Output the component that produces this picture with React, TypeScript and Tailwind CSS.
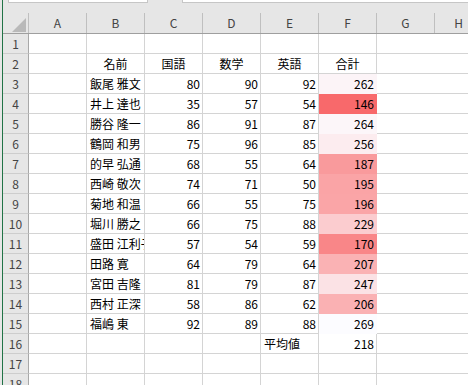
import React from 'react';

type Row = { name: string; kokugo: number; sugaku: number; eigo: number };

const rows: Row[] = [
  { name: '飯尾 雅文', kokugo: 80, sugaku: 90, eigo: 92 },
  { name: '井上 達也', kokugo: 35, sugaku: 57, eigo: 54 },
  { name: '勝谷 隆一', kokugo: 86, sugaku: 91, eigo: 87 },
  { name: '鶴岡 和男', kokugo: 75, sugaku: 96, eigo: 85 },
  { name: '的早 弘通', kokugo: 68, sugaku: 55, eigo: 64 },
  { name: '西崎 敬次', kokugo: 74, sugaku: 71, eigo: 50 },
  { name: '菊地 和温', kokugo: 66, sugaku: 55, eigo: 75 },
  { name: '堀川 勝之', kokugo: 66, sugaku: 75, eigo: 88 },
  { name: '盛田 江利子', kokugo: 57, sugaku: 54, eigo: 59 },
  { name: '田路 寛', kokugo: 64, sugaku: 79, eigo: 64 },
  { name: '宮田 吉隆', kokugo: 81, sugaku: 79, eigo: 87 },
  { name: '西村 正深', kokugo: 58, sugaku: 86, eigo: 62 },
  { name: '福嶋 東', kokugo: 92, sugaku: 89, eigo: 88 },
];

const totals = rows.map((r) => r.kokugo + r.sugaku + r.eigo);
const minT = Math.min(...totals);
const maxT = Math.max(...totals);

// 2色スケール（白 → 赤）
function heat(v: number) {
  const t = (maxT - v) / (maxT - minT);
  const r = Math.round(252 + (248 - 252) * t);
  const g = Math.round(252 + (105 - 252) * t);
  const b = Math.round(255 + (107 - 255) * t);
  return `rgb(${r}, ${g}, ${b})`;
}

const cols = ['A', 'B', 'C', 'D', 'E', 'F', 'G'];

function Cell({
  children,
  align = 'left',
  fill,
}: {
  children?: React.ReactNode;
  align?: 'left' | 'right' | 'center';
  fill?: string;
}) {
  const alignCls =
    align === 'right' ? 'justify-end pr-[2px]' : align === 'center' ? 'justify-center' : 'justify-start pl-[3px]';
  return (
    <div
      className={`flex h-[20px] w-[58px] shrink-0 items-center overflow-hidden whitespace-nowrap border-b border-r border-[#d4d4d4] text-[12px] text-black ${alignCls}`}
      style={fill ? { backgroundColor: fill, borderColor: fill } : undefined}
    >
      {children}
    </div>
  );
}

function LastCell() {
  return <div className="h-[20px] flex-1 border-b border-[#d4d4d4]" />;
}

function RowHead({ n }: { n: number }) {
  return (
    <div className="flex h-[20px] w-[26px] shrink-0 items-center justify-center border-b border-r border-b-[#cdcdcd] border-r-[#a8a8a8] bg-[#e6e6e6] text-[12px] text-[#444]">
      {n}
    </div>
  );
}

export default function App() {
  const body: React.ReactNode[] = [];

  body.push(
    <div key="r1" className="flex">
      <RowHead n={1} />
      {cols.slice(0, 6).map((c) => (
        <Cell key={c} />
      ))}
      <LastCell />
    </div>
  );

  body.push(
    <div key="r2" className="flex">
      <RowHead n={2} />
      <Cell />
      <Cell align="center">名前</Cell>
      <Cell align="center">国語</Cell>
      <Cell align="center">数学</Cell>
      <Cell align="center">英語</Cell>
      <Cell align="center">合計</Cell>
      <LastCell />
    </div>
  );

  rows.forEach((r, i) => {
    const total = totals[i];
    body.push(
      <div key={`d${i}`} className="flex">
        <RowHead n={i + 3} />
        <Cell />
        <Cell>{r.name}</Cell>
        <Cell align="right">{r.kokugo}</Cell>
        <Cell align="right">{r.sugaku}</Cell>
        <Cell align="right">{r.eigo}</Cell>
        <Cell align="right" fill={heat(total)}>
          {total}
        </Cell>
        <LastCell />
      </div>
    );
  });

  const avg = Math.round(totals.reduce((a, b) => a + b, 0) / totals.length);

  body.push(
    <div key="r16" className="flex">
      <RowHead n={16} />
      <Cell />
      <Cell />
      <Cell />
      <Cell />
      <Cell>平均値</Cell>
      <Cell align="right">{avg}</Cell>
      <LastCell />
    </div>
  );

  [17, 18].forEach((n) => {
    body.push(
      <div key={`e${n}`} className="flex">
        <RowHead n={n} />
        {cols.slice(0, 6).map((c) => (
          <Cell key={c} />
        ))}
        <LastCell />
      </div>
    );
  });

  return (
    <div
      className="flex h-[385px] w-[468px] overflow-hidden bg-white"
      style={{ fontFamily: '"Noto Sans CJK JP", "Noto Sans", sans-serif' }}
    >
      {/* 左端のガター */}
      <div className="w-[2px] shrink-0 bg-[#e6e6e6]" />
      <div className="w-px shrink-0 bg-[#217346]" />

      <div className="flex min-w-0 flex-1 flex-col">
        {/* 数式バーの下端 */}
        <div className="flex h-[3px] shrink-0 bg-[#e6e6e6]">
          <div className="ml-[5px] w-[140px] border-x border-b border-[#c6c6c6] bg-white" />
          <div className="ml-[34px] flex-1 border-b border-l border-[#c6c6c6] bg-white" />
        </div>

        {/* 列見出し */}
        <div className="flex h-[31px] shrink-0 items-end border-b border-[#9f9f9f] bg-[#e6e6e6]">
          <div className="flex h-[20px] w-[26px] shrink-0 items-end justify-end border-r border-[#bfbfbf] pb-[1px] pr-[2px]">
            <svg width="14" height="14" viewBox="0 0 14 14">
              <polygon points="14,0 14,14 0,14" fill="#b9b9b9" />
            </svg>
          </div>
          {cols.map((c) => (
            <div
              key={c}
              className="flex h-[20px] w-[58px] shrink-0 items-center justify-center border-r border-[#bfbfbf] text-[12px] text-[#444]"
            >
              {c}
            </div>
          ))}
          <div className="flex h-[20px] flex-1 items-center justify-center pl-[14px] text-[12px] text-[#444]">H</div>
        </div>

        {body}
      </div>
    </div>
  );
}
